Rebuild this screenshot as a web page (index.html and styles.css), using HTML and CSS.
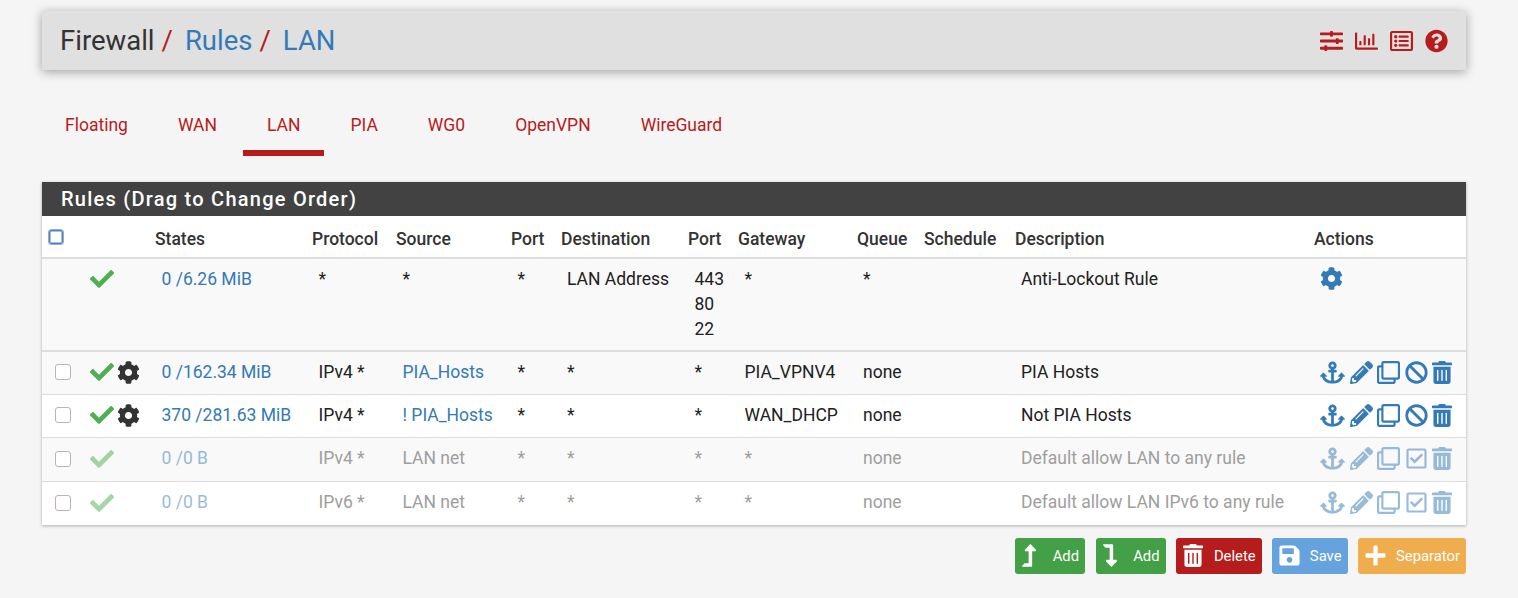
FILE: index.html
```html
<!DOCTYPE html>
<html lang="en">
<head>
    <meta charset="UTF-8">
    <meta name="viewport" content="width=device-width, initial-scale=1.0">
    <title>Firewall / Rules / LAN</title>
    <link rel="stylesheet" href="styles.css">
</head>
<body>
    <svg class="sprite" xmlns="http://www.w3.org/2000/svg">
        <symbol id="i-check" viewBox="0 0 512 512"><path d="M173.898 439.404l-166.4-166.4c-9.997-9.997-9.997-26.206 0-36.204l36.203-36.204c9.997-9.998 26.207-9.998 36.204 0L192 312.69 432.095 72.596c9.997-9.997 26.207-9.997 36.204 0l36.203 36.204c9.997 9.997 9.997 26.206 0 36.204l-294.4 294.401c-9.998 9.997-26.207 9.997-36.204-.001z"/></symbol>
        <symbol id="i-cog" viewBox="0 0 512 512"><path d="M487.4 315.7l-42.6-24.6c4.3-23.2 4.3-47 0-70.2l42.6-24.6c4.9-2.8 7.1-8.6 5.5-14-11.1-35.6-30-67.8-54.7-94.6-3.8-4.1-10-5.1-14.8-2.3L380.8 110c-17.9-15.4-38.5-27.3-60.8-35.1V25.8c0-5.6-3.9-10.5-9.4-11.7-36.7-8.2-74.3-7.8-109.2 0-5.5 1.2-9.4 6.1-9.4 11.7V75c-22.2 7.9-42.8 19.8-60.8 35.1L88.7 85.5c-4.9-2.8-11-1.9-14.8 2.3-24.7 26.7-43.6 58.9-54.7 94.6-1.7 5.4.6 11.2 5.5 14L67.3 221c-4.3 23.2-4.3 47 0 70.2l-42.6 24.6c-4.9 2.8-7.1 8.6-5.5 14 11.1 35.6 30 67.8 54.7 94.6 3.8 4.1 10 5.1 14.8 2.3l42.6-24.6c17.9 15.4 38.5 27.3 60.8 35.1v49.2c0 5.6 3.9 10.5 9.4 11.7 36.7 8.2 74.3 7.8 109.2 0 5.5-1.2 9.4-6.1 9.4-11.7v-49.2c22.2-7.9 42.8-19.8 60.8-35.1l42.6 24.6c4.9 2.8 11 1.9 14.8-2.3 24.7-26.7 43.6-58.9 54.7-94.6 1.5-5.5-.7-11.3-5.6-14.1zM256 336c-44.1 0-80-35.9-80-80s35.9-80 80-80 80 35.9 80 80-35.9 80-80 80z"/></symbol>
        <symbol id="i-anchor" viewBox="0 0 576 512"><path d="M12.971 352h32.394C67.172 454.735 181.944 512 288 512c106.229 0 220.853-57.38 242.635-160h32.394c10.691 0 16.045-12.926 8.485-20.485l-67.029-67.029c-4.686-4.686-12.284-4.686-16.971 0l-67.029 67.029c-7.56 7.56-2.206 20.485 8.485 20.485h35.146c-20.29 54.317-84.963 86.588-144.117 94.015V256h52c6.627 0 12-5.373 12-12v-40c0-6.627-5.373-12-12-12h-52v-5.47c37.281-13.178 63.995-48.725 64-90.518C384.005 43.772 341.605.738 289.37.01 235.723-.739 192 42.525 192 96c0 41.798 26.716 77.35 64 90.53V192h-52c-6.627 0-12 5.373-12 12v40c0 6.627 5.373 12 12 12h52v190.015c-58.936-7.399-123.82-39.679-144.117-94.015h35.146c10.691 0 16.045-12.926 8.485-20.485l-67.029-67.029c-4.686-4.686-12.284-4.686-16.971 0L4.485 331.515C-3.074 339.074 2.28 352 12.971 352zM288 64c17.645 0 32 14.355 32 32s-14.355 32-32 32-32-14.355-32-32 14.355-32 32-32z"/></symbol>
        <symbol id="i-pencil" viewBox="0 0 512 512"><path d="M497.9 142.1l-46.1 46.1c-4.7 4.7-12.3 4.7-17 0l-111-111c-4.7-4.7-4.7-12.3 0-17l46.1-46.1c18.7-18.7 49.1-18.7 67.9 0l60.1 60.1c18.8 18.7 18.8 49.1 0 67.9zM284.2 99.8L21.6 362.4.4 483.9c-2.9 16.4 11.4 30.6 27.8 27.8l121.5-21.3 262.6-262.6c4.7-4.7 4.7-12.3 0-17l-111-111c-4.8-4.7-12.4-4.7-17.1 0zM124.1 339.9c-5.5-5.5-5.5-14.3 0-19.8l154-154c5.5-5.5 14.3-5.5 19.8 0s5.5 14.3 0 19.8l-154 154c-5.5 5.5-14.3 5.5-19.8 0zM88 424h48v36.3l-64.5 11.3-31.1-31.1L51.7 376H88v48z"/></symbol>
        <symbol id="i-clone" viewBox="0 0 512 512"><path d="M464 0H144c-26.51 0-48 21.49-48 48v48H48c-26.51 0-48 21.49-48 48v320c0 26.51 21.49 48 48 48h320c26.51 0 48-21.49 48-48v-48h48c26.51 0 48-21.49 48-48V48c0-26.51-21.49-48-48-48zM362 464H54a6 6 0 0 1-6-6V150a6 6 0 0 1 6-6h42v224c0 26.51 21.49 48 48 48h224v42a6 6 0 0 1-6 6zm96-96H150a6 6 0 0 1-6-6V54a6 6 0 0 1 6-6h308a6 6 0 0 1 6 6v308a6 6 0 0 1-6 6z"/></symbol>
        <symbol id="i-ban" viewBox="0 0 512 512"><path d="M256 8C119.034 8 8 119.033 8 256s111.034 248 248 248 248-111.034 248-248S392.967 8 256 8zm130.108 117.892c65.448 65.448 70 165.481 20.677 235.637L150.47 105.216c70.204-49.356 170.226-44.735 235.638 20.676zM125.892 386.108c-65.448-65.448-70-165.481-20.677-235.637L361.53 406.784c-70.203 49.356-170.226 44.736-235.638-20.676z"/></symbol>
        <symbol id="i-trash" viewBox="0 0 448 512"><path d="M32 464a48 48 0 0 0 48 48h288a48 48 0 0 0 48-48V128H32zm272-256a16 16 0 0 1 32 0v224a16 16 0 0 1-32 0zm-96 0a16 16 0 0 1 32 0v224a16 16 0 0 1-32 0zm-96 0a16 16 0 0 1 32 0v224a16 16 0 0 1-32 0zM432 32H312l-9.4-18.7A24 24 0 0 0 281.1 0H166.8a23.72 23.72 0 0 0-21.4 13.3L136 32H16A16 16 0 0 0 0 48v32a16 16 0 0 0 16 16h416a16 16 0 0 0 16-16V48a16 16 0 0 0-16-16z"/></symbol>
        <symbol id="i-check-square" viewBox="0 0 448 512"><path d="M400 32H48C21.49 32 0 53.49 0 80v352c0 26.51 21.49 48 48 48h352c26.51 0 48-21.49 48-48V80c0-26.51-21.49-48-48-48zm0 400H48V80h352v352zm-35.864-241.724L191.547 361.48c-4.705 4.667-12.303 4.637-16.97-.068l-90.781-91.516c-4.667-4.705-4.637-12.303.068-16.97l22.719-22.536c4.705-4.667 12.303-4.637 16.97.068l59.792 60.277 141.352-140.216c4.705-4.667 12.303-4.637 16.97.068l22.536 22.718c4.667 4.706 4.637 12.304-.068 16.971z"/></symbol>
        <symbol id="i-sliders" viewBox="0 0 512 512"><path d="M496 384H160v-16c0-8.8-7.2-16-16-16h-32c-8.8 0-16 7.2-16 16v16H16c-8.8 0-16 7.2-16 16v32c0 8.8 7.2 16 16 16h80v16c0 8.8 7.2 16 16 16h32c8.8 0 16-7.2 16-16v-16h336c8.8 0 16-7.2 16-16v-32c0-8.8-7.2-16-16-16zm0-160h-80v-16c0-8.8-7.2-16-16-16h-32c-8.8 0-16 7.2-16 16v16H16c-8.8 0-16 7.2-16 16v32c0 8.8 7.2 16 16 16h336v16c0 8.8 7.2 16 16 16h32c8.8 0 16-7.2 16-16v-16h80c8.8 0 16-7.2 16-16v-32c0-8.8-7.2-16-16-16zm0-160H288V48c0-8.8-7.2-16-16-16h-32c-8.8 0-16 7.2-16 16v16H16C7.2 64 0 71.2 0 80v32c0 8.8 7.2 16 16 16h208v16c0 8.8 7.2 16 16 16h32c8.8 0 16-7.2 16-16v-16h208c8.8 0 16-7.2 16-16V80c0-8.8-7.2-16-16-16z"/></symbol>
        <symbol id="i-chart" viewBox="0 0 512 512"><path d="M396.8 352h22.4c6.4 0 12.8-6.4 12.8-12.8V108.8c0-6.4-6.4-12.8-12.8-12.8h-22.4c-6.4 0-12.8 6.4-12.8 12.8v230.4c0 6.4 6.4 12.8 12.8 12.8zm-192 0h22.4c6.4 0 12.8-6.4 12.8-12.8V140.8c0-6.4-6.4-12.8-12.8-12.8h-22.4c-6.4 0-12.8 6.4-12.8 12.8v198.4c0 6.4 6.4 12.8 12.8 12.8zm96 0h22.4c6.4 0 12.8-6.4 12.8-12.8V204.8c0-6.4-6.4-12.8-12.8-12.8h-22.4c-6.4 0-12.8 6.4-12.8 12.8v134.4c0 6.4 6.4 12.8 12.8 12.8zM496 400H48V80c0-8.84-7.16-16-16-16H16C7.16 64 0 71.16 0 80v336c0 17.67 14.33 32 32 32h464c8.84 0 16-7.16 16-16v-16c0-8.84-7.16-16-16-16zm-387.2-48h22.4c6.4 0 12.8-6.4 12.8-12.8v-70.4c0-6.4-6.4-12.8-12.8-12.8h-22.4c-6.4 0-12.8 6.4-12.8 12.8v70.4c0 6.4 6.4 12.8 12.8 12.8z"/></symbol>
        <symbol id="i-list" viewBox="0 0 512 512"><path d="M464 32H48C21.49 32 0 53.49 0 80v352c0 26.51 21.49 48 48 48h416c26.51 0 48-21.49 48-48V80c0-26.51-21.49-48-48-48zm-6 400H54a6 6 0 0 1-6-6V86a6 6 0 0 1 6-6h404a6 6 0 0 1 6 6v340a6 6 0 0 1-6 6zm-42-92v24c0 6.627-5.373 12-12 12H204c-6.627 0-12-5.373-12-12v-24c0-6.627 5.373-12 12-12h200c6.627 0 12 5.373 12 12zm0-96v24c0 6.627-5.373 12-12 12H204c-6.627 0-12-5.373-12-12v-24c0-6.627 5.373-12 12-12h200c6.627 0 12 5.373 12 12zm0-96v24c0 6.627-5.373 12-12 12H204c-6.627 0-12-5.373-12-12v-24c0-6.627 5.373-12 12-12h200c6.627 0 12 5.373 12 12zm-252 12c0 19.882-16.118 36-36 36s-36-16.118-36-36 16.118-36 36-36 36 16.118 36 36zm0 96c0 19.882-16.118 36-36 36s-36-16.118-36-36 16.118-36 36-36 36 16.118 36 36zm0 96c0 19.882-16.118 36-36 36s-36-16.118-36-36 16.118-36 36-36 36 16.118 36 36z"/></symbol>
        <symbol id="i-question" viewBox="0 0 512 512"><path d="M504 256c0 136.997-111.043 248-248 248S8 392.997 8 256C8 119.083 119.043 8 256 8s248 111.083 248 248zM262.655 90c-54.497 0-89.255 22.957-116.549 63.758-3.536 5.286-2.353 12.415 2.715 16.258l34.699 26.31c5.205 3.947 12.621 3.008 16.665-2.122 17.864-22.658 30.113-35.797 57.303-35.797 20.429 0 45.698 13.148 45.698 32.958 0 14.976-12.363 22.667-32.534 33.976C247.128 238.528 216 254.941 216 296v4c0 6.627 5.373 12 12 12h56c6.627 0 12-5.373 12-12v-1.333c0-28.462 83.186-29.647 83.186-106.667 0-58.002-60.165-102-116.531-102zM256 338c-25.365 0-46 20.635-46 46 0 25.364 20.635 46 46 46s46-20.636 46-46c0-25.365-20.635-46-46-46z"/></symbol>
        <symbol id="i-up" viewBox="0 0 320 512"><path d="M313.553 119.669L209.587 7.666c-9.485-10.214-25.676-10.229-35.174 0L70.438 119.669C56.232 134.969 67.062 160 88.025 160H152v272H68.024a11.996 11.996 0 0 0-8.485 3.515l-56 56C-4.021 499.074 1.333 512 12.024 512H208c13.255 0 24-10.745 24-24V160h64c20.878 0 31.851-24.969 17.553-40.331z"/></symbol>
        <symbol id="i-down" viewBox="0 0 320 512"><path d="M313.553 392.331L209.587 504.334c-9.485 10.214-25.676 10.229-35.174 0L70.438 392.331C56.232 377.031 67.062 352 88.025 352H152V80H68.024a11.996 11.996 0 0 1-8.485-3.515l-56-56C-4.021 12.926 1.333 0 12.024 0H208c13.255 0 24 10.745 24 24v328h64c20.878 0 31.851 24.969 17.553 40.331z"/></symbol>
        <symbol id="i-save" viewBox="0 0 448 512"><path d="M433.941 129.941l-83.882-83.882A48 48 0 0 0 316.118 32H48C21.49 32 0 53.49 0 80v352c0 26.51 21.49 48 48 48h352c26.51 0 48-21.49 48-48V163.882a48 48 0 0 0-14.059-33.941zM224 416c-35.346 0-64-28.654-64-64 0-35.346 28.654-64 64-64s64 28.654 64 64c0 35.346-28.654 64-64 64zm96-304.52V212c0 6.627-5.373 12-12 12H76c-6.627 0-12-5.373-12-12V108c0-6.627 5.373-12 12-12h228.52c3.183 0 6.235 1.264 8.485 3.515l3.48 3.48A11.996 11.996 0 0 1 320 111.48z"/></symbol>
        <symbol id="i-plus" viewBox="0 0 448 512"><path d="M416 208H272V64c0-17.67-14.33-32-32-32h-32c-17.67 0-32 14.33-32 32v144H32c-17.67 0-32 14.33-32 32v32c0 17.67 14.33 32 32 32h144v144c0 17.67 14.33 32 32 32h32c17.67 0 32-14.33 32-32V304h144c17.67 0 32-14.33 32-32v-32c0-17.67-14.33-32-32-32z"/></symbol>
    </svg>

    <div class="container">
        <header class="page-header">
            <h1 class="breadcrumb">
                <span>Firewall</span><i class="sep">/</i><a href="#">Rules</a><i class="sep">/</i><a href="#">LAN</a>
            </h1>
            <div class="shortcuts">
                <svg class="ic ic-sliders"><use href="#i-sliders"/></svg>
                <svg class="ic ic-chart"><use href="#i-chart"/></svg>
                <svg class="ic ic-list"><use href="#i-list"/></svg>
                <svg class="ic ic-question"><use href="#i-question"/></svg>
            </div>
        </header>

        <ul class="tabs">
            <li><a href="#">Floating</a></li>
            <li><a href="#">WAN</a></li>
            <li class="active"><a href="#">LAN</a></li>
            <li><a href="#">PIA</a></li>
            <li><a href="#">WG0</a></li>
            <li><a href="#">OpenVPN</a></li>
            <li><a href="#">WireGuard</a></li>
        </ul>

        <section class="panel">
            <h2 class="panel-title">Rules (Drag to Change Order)</h2>
            <table class="rules">
                <colgroup>
                    <col class="c-sel"><col class="c-status"><col class="c-states"><col class="c-proto">
                    <col class="c-source"><col class="c-port"><col class="c-dest"><col class="c-port">
                    <col class="c-gw"><col class="c-queue"><col class="c-sched"><col class="c-desc"><col class="c-actions">
                </colgroup>
                <thead>
                    <tr>
                        <th><input class="box box-focus" type="checkbox" aria-label="Select all"></th>
                        <th></th>
                        <th>States</th>
                        <th>Protocol</th>
                        <th>Source</th>
                        <th>Port</th>
                        <th>Destination</th>
                        <th>Port</th>
                        <th>Gateway</th>
                        <th>Queue</th>
                        <th>Schedule</th>
                        <th>Description</th>
                        <th>Actions</th>
                    </tr>
                </thead>
                <tbody>
                    <tr class="locked">
                        <td></td>
                        <td><svg class="ic ic-ok"><use href="#i-check"/></svg></td>
                        <td><a href="#">0 /6.26 MiB</a></td>
                        <td>*</td>
                        <td>*</td>
                        <td>*</td>
                        <td>LAN Address</td>
                        <td>443<br>80<br>22</td>
                        <td>*</td>
                        <td>*</td>
                        <td></td>
                        <td>Anti-Lockout Rule</td>
                        <td><svg class="ic ic-act"><use href="#i-cog"/></svg></td>
                    </tr>
                    <tr class="shade">
                        <td><input class="box" type="checkbox" aria-label="Select rule"></td>
                        <td><div class="status"><svg class="ic ic-ok"><use href="#i-check"/></svg><svg class="ic ic-adv"><use href="#i-cog"/></svg></div></td>
                        <td><a href="#">0 /162.34 MiB</a></td>
                        <td>IPv4 *</td>
                        <td><a href="#">PIA_Hosts</a></td>
                        <td>*</td>
                        <td>*</td>
                        <td>*</td>
                        <td>PIA_VPNV4</td>
                        <td>none</td>
                        <td></td>
                        <td>PIA Hosts</td>
                        <td>
                            <div class="actions">
                                <svg class="ic ic-anchor"><use href="#i-anchor"/></svg>
                                <svg class="ic ic-act"><use href="#i-pencil"/></svg>
                                <svg class="ic ic-act"><use href="#i-clone"/></svg>
                                <svg class="ic ic-act"><use href="#i-ban"/></svg>
                                <svg class="ic ic-trash"><use href="#i-trash"/></svg>
                            </div>
                        </td>
                    </tr>
                    <tr>
                        <td><input class="box" type="checkbox" aria-label="Select rule"></td>
                        <td><div class="status"><svg class="ic ic-ok"><use href="#i-check"/></svg><svg class="ic ic-adv"><use href="#i-cog"/></svg></div></td>
                        <td><a href="#">370 /281.63 MiB</a></td>
                        <td>IPv4 *</td>
                        <td><a href="#">! PIA_Hosts</a></td>
                        <td>*</td>
                        <td>*</td>
                        <td>*</td>
                        <td>WAN_DHCP</td>
                        <td>none</td>
                        <td></td>
                        <td>Not PIA Hosts</td>
                        <td>
                            <div class="actions">
                                <svg class="ic ic-anchor"><use href="#i-anchor"/></svg>
                                <svg class="ic ic-act"><use href="#i-pencil"/></svg>
                                <svg class="ic ic-act"><use href="#i-clone"/></svg>
                                <svg class="ic ic-act"><use href="#i-ban"/></svg>
                                <svg class="ic ic-trash"><use href="#i-trash"/></svg>
                            </div>
                        </td>
                    </tr>
                    <tr class="shade off">
                        <td><input class="box" type="checkbox" aria-label="Select rule"></td>
                        <td><div class="status"><svg class="ic ic-ok"><use href="#i-check"/></svg></div></td>
                        <td><a href="#">0 /0 B</a></td>
                        <td>IPv4 *</td>
                        <td>LAN net</td>
                        <td>*</td>
                        <td>*</td>
                        <td>*</td>
                        <td>*</td>
                        <td>none</td>
                        <td></td>
                        <td>Default allow LAN to any rule</td>
                        <td>
                            <div class="actions">
                                <svg class="ic ic-anchor"><use href="#i-anchor"/></svg>
                                <svg class="ic ic-act"><use href="#i-pencil"/></svg>
                                <svg class="ic ic-act"><use href="#i-clone"/></svg>
                                <svg class="ic ic-act"><use href="#i-check-square"/></svg>
                                <svg class="ic ic-trash"><use href="#i-trash"/></svg>
                            </div>
                        </td>
                    </tr>
                    <tr class="off">
                        <td><input class="box" type="checkbox" aria-label="Select rule"></td>
                        <td><div class="status"><svg class="ic ic-ok"><use href="#i-check"/></svg></div></td>
                        <td><a href="#">0 /0 B</a></td>
                        <td>IPv6 *</td>
                        <td>LAN net</td>
                        <td>*</td>
                        <td>*</td>
                        <td>*</td>
                        <td>*</td>
                        <td>none</td>
                        <td></td>
                        <td>Default allow LAN IPv6 to any rule</td>
                        <td>
                            <div class="actions">
                                <svg class="ic ic-anchor"><use href="#i-anchor"/></svg>
                                <svg class="ic ic-act"><use href="#i-pencil"/></svg>
                                <svg class="ic ic-act"><use href="#i-clone"/></svg>
                                <svg class="ic ic-act"><use href="#i-check-square"/></svg>
                                <svg class="ic ic-trash"><use href="#i-trash"/></svg>
                            </div>
                        </td>
                    </tr>
                </tbody>
            </table>
        </section>

        <div class="toolbar">
            <button class="btn btn-green w-add" type="button"><svg class="ic ic-arrow"><use href="#i-up"/></svg>Add</button>
            <button class="btn btn-green w-add" type="button"><svg class="ic ic-arrow"><use href="#i-down"/></svg>Add</button>
            <button class="btn btn-red w-del" type="button"><svg class="ic ic-btn-trash"><use href="#i-trash"/></svg>Delete</button>
            <button class="btn btn-blue w-save" type="button"><svg class="ic ic-btn"><use href="#i-save"/></svg>Save</button>
            <button class="btn btn-orange w-sep" type="button"><svg class="ic ic-btn"><use href="#i-plus"/></svg>Separator</button>
        </div>
    </div>
</body>
</html>
```

FILE: styles.css
```css
html, body {
    height: 100%;
    overflow: hidden;
}
body {
    margin: 0;
    background-color: #f5f5f5;
    color: #212121;
    font-family: Roboto, "Liberation Sans", sans-serif;
    font-size: 17.5px;
}
a {
    color: #337ab7;
    text-decoration: none;
}
.sprite {
    display: none;
}
.container {
    width: 1424px;
    margin-left: 42px;
    padding-top: 11px;
}

/* icons */
.ic {
    display: block;
    fill: currentColor;
    flex: none;
}
.ic-ok {
    width: 24px;
    height: 24px;
    color: #4caf50;
}
.ic-adv {
    width: 23px;
    height: 23px;
    color: #333;
}
.ic-act {
    width: 23px;
    height: 23px;
    color: #337ab7;
}
.ic-anchor {
    width: 25px;
    height: 23px;
    color: #337ab7;
}
.ic-trash {
    width: 20px;
    height: 23px;
    color: #337ab7;
}

/* page header */
.page-header {
    display: flex;
    align-items: center;
    justify-content: space-between;
    height: 59px;
    padding: 0 18px;
    background-color: #e0e0e0;
    box-shadow: 0 2px 10px rgba(0, 0, 0, 0.35);
}
.breadcrumb {
    margin: 0;
    font-size: 27.5px;
    font-weight: 400;
    color: #333;
}
.sep {
    margin: 0 12px 0 7px;
    font-style: normal;
    color: #b71c1c;
}
.shortcuts {
    display: flex;
    align-items: center;
    gap: 12px;
    color: #b71c1c;
}
.shortcuts .ic {
    width: 23px;
    height: 24px;
}

/* tabs */
.tabs {
    display: flex;
    gap: 2px;
    margin: 30px 0 26px -1px;
    padding: 0;
    list-style: none;
}
.tabs a {
    display: block;
    height: 50px;
    padding: 0 24px;
    line-height: 50px;
    color: #b71c1c;
}
.tabs .active a {
    border-bottom: 6px solid #b71c1c;
}

/* rules panel */
.panel {
    background-color: #fff;
    box-shadow: 0 1px 3px rgba(0, 0, 0, 0.3);
}
.panel-title {
    margin: 0;
    height: 34px;
    padding-left: 19px;
    background-color: #424242;
    color: #fff;
    font-size: 20px;
    font-weight: 500;
    line-height: 34px;
    letter-spacing: 1.25px;
}
.rules {
    width: 1424px;
    table-layout: fixed;
    border-collapse: collapse;
}
.c-sel { width: 35px; }
.c-status { width: 72px; }
.c-states { width: 157px; }
.c-proto { width: 84px; }
.c-source { width: 115px; }
.c-port { width: 50px; }
.c-dest { width: 127px; }
.c-gw { width: 119px; }
.c-queue { width: 67px; }
.c-sched { width: 91px; }
.c-desc { width: 299px; }
.c-actions { width: 158px; }

.rules th {
    box-sizing: border-box;
    height: 42px;
    padding: 4px 0 0 6px;
    border-bottom: 2px solid #ddd;
    background-color: #fff;
    font-weight: 500;
    text-align: left;
    color: #333;
}
.rules td {
    box-sizing: border-box;
    height: 43.5px;
    padding: 0 0 1px 12.5px;
    border-bottom: 1px solid #ddd;
    line-height: 25px;
}
/* destination, queue, description and actions sit half a pixel further left */
.rules td:nth-child(7),
.rules td:nth-child(10),
.rules td:nth-child(12),
.rules td:nth-child(13) {
    padding-left: 12px;
}
.rules tbody tr:last-child td {
    border-bottom: none;
}
.rules .locked td {
    height: 92.5px;
    padding-top: 8px;
    vertical-align: top;
    background-color: #f9f9f9;
    border-bottom: 2px solid #ddd;
}
.rules .shade td {
    background-color: #f9f9f9;
}
.off td > *,
.off td {
    color: #9e9e9e;
}
.off a,
.off .ic {
    opacity: 0.5;
}
.off .ic-ok {
    color: #4caf50;
}
.off .ic-act,
.off .ic-anchor,
.off .ic-trash,
.off a {
    color: #337ab7;
}
.status {
    display: flex;
    align-items: center;
    gap: 3px;
}
.actions {
    display: flex;
    align-items: center;
    gap: 4.5px;
}

/* checkboxes */
.box {
    display: block;
    appearance: none;
    width: 16px;
    height: 16px;
    margin: 0;
    background-color: #fff;
    border: 1px solid #bdb5ad;
    border-radius: 3px;
}
.box-focus {
    margin: -4px 0 0 0;
    border-color: #aaa;
    box-shadow: inset 0 0 0 1.5px #4285d8;
}

/* bottom buttons */
.toolbar {
    display: flex;
    justify-content: flex-end;
    gap: 10.5px;
    margin-top: 13px;
}
.btn {
    display: flex;
    align-items: center;
    justify-content: space-between;
    height: 36px;
    padding: 0 5px 0 6px;
    border: 1px solid transparent;
    border-radius: 3px;
    color: #fff;
    font-family: inherit;
    font-size: 14.8px;
}
.btn-green {
    background-color: #43a047;
}
.btn-red {
    background-color: #b71c1c;
}
.btn-blue {
    background-color: #66a2dd;
}
.btn-orange {
    background-color: #f0ad4e;
}
.w-add { width: 70px; }
.w-del { width: 85.6px; }
.w-save { width: 75.4px; }
.w-sep { width: 108px; }
.ic-arrow {
    width: 14px;
    height: 23px;
}
.ic-btn {
    width: 21px;
    height: 23px;
}
.ic-btn-trash {
    width: 20px;
    height: 23px;
}
```
